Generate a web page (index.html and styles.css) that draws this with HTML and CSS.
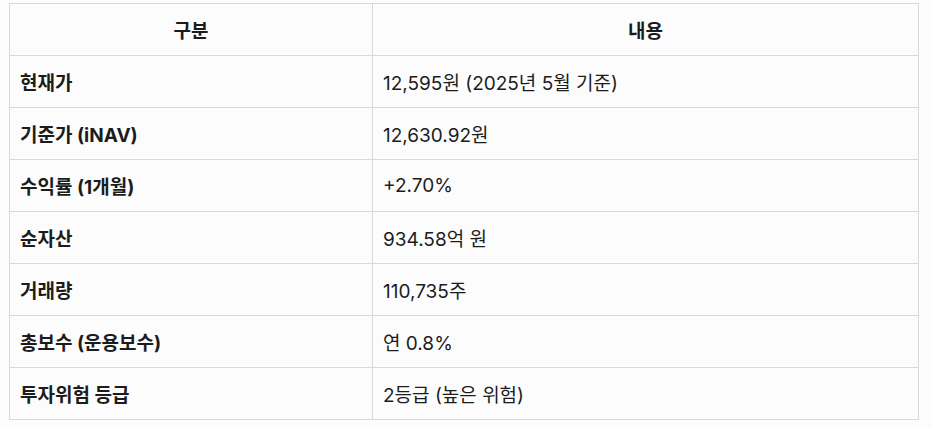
FILE: index.html
```html
<!DOCTYPE html>
<html lang="ko">
<head>
<meta charset="utf-8">
<link rel="stylesheet" href="styles.css">
</head>
<body>
<table class="info-table">
  <thead>
    <tr><th class="col-key">구분</th><th class="col-val">내용</th></tr>
  </thead>
  <tbody>
    <tr><td class="key">현재가</td><td>12,595원 (2025년 5월 기준)</td></tr>
    <tr><td class="key">기준가 (iNAV)</td><td>12,630.92원</td></tr>
    <tr><td class="key">수익률 (1개월)</td><td>+2.70%</td></tr>
    <tr><td class="key">순자산</td><td>934.58억 원</td></tr>
    <tr><td class="key">거래량</td><td>110,735주</td></tr>
    <tr><td class="key">총보수 (운용보수)</td><td>연 0.8%</td></tr>
    <tr><td class="key">투자위험 등급</td><td>2등급 (높은 위험)</td></tr>
  </tbody>
</table>
</body>
</html>
```
FILE: styles.css
```css
html, body {
  margin: 0;
  background: #fcfcfc;
}
body {
  padding: 3px 0 0 9px;
  font-family: Inter, "Noto Sans CJK KR", sans-serif;
  font-size: 19px;
  color: #1c1c1c;
}
.info-table {
  border-collapse: collapse;
  width: 910px;
  table-layout: fixed;
}
.info-table th,
.info-table td {
  border: 1px solid #d9d9d9;
  height: 52px;
  padding: 0 10px;
  box-sizing: border-box;
  vertical-align: middle;
  text-align: left;
  font-weight: 400;
}
.info-table th {
  text-align: center;
  font-weight: 700;
}
.col-key { width: 363px; }
.info-table td.key { font-weight: 700; }
```
